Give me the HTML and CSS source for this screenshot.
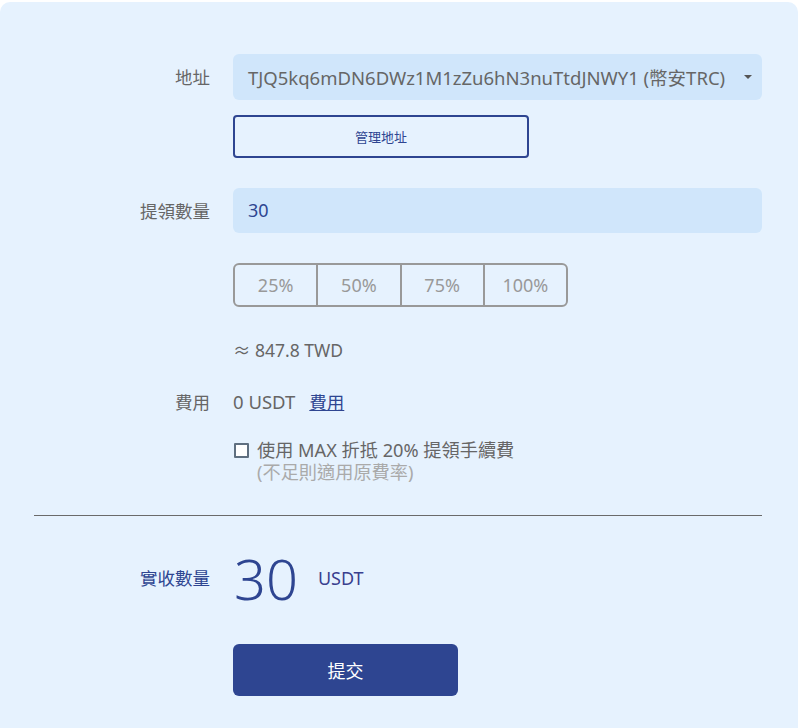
FILE: index.html
```html
<!DOCTYPE html>
<html lang="zh-Hant">
<head>
<meta charset="utf-8">
<link rel="stylesheet" href="styles.css">
</head>
<body>
<div class="card">
  <div class="row">
    <div class="label">地址</div>
    <div class="field">
      <div class="select">
        <span class="select-text">TJQ5kq6mDN6DWz1M1zZu6hN3nuTtdJNWY1 (幣安TRC)</span>
        <span class="caret"></span>
      </div>
      <button class="manage">管理地址</button>
    </div>
  </div>

  <div class="row row-amount">
    <div class="label">提領數量</div>
    <div class="field">
      <div class="input">30</div>
      <div class="pct">
        <span class="pct-item">25%</span>
        <span class="pct-item">50%</span>
        <span class="pct-item">75%</span>
        <span class="pct-item">100%</span>
      </div>
      <div class="approx">≈ 847.8 TWD</div>
    </div>
  </div>

  <div class="row row-fee">
    <div class="label">費用</div>
    <div class="field">
      <div class="fee-line"><span>0 USDT</span><a class="fee-link">費用</a></div>
      <div class="max-opt">
        <span class="checkbox"></span>
        <div class="max-text">
          <div>使用 MAX 折抵 20% 提領手續費</div>
          <div class="max-sub">(不足則適用原費率)</div>
        </div>
      </div>
    </div>
  </div>

  <hr class="divider">

  <div class="row row-receive">
    <div class="label label-dark">實收數量</div>
    <div class="field receive">
      <span class="big">30</span>
      <span class="unit">USDT</span>
    </div>
  </div>

  <div class="row row-submit">
    <div class="label"></div>
    <div class="field">
      <button class="submit">提交</button>
    </div>
  </div>
</div>
</body>
</html>
```
FILE: styles.css
```css
* { box-sizing: border-box; }
html, body { margin: 0; padding: 0; background: #ffffff; }
body {
  font-family: "Noto Sans", "Noto Sans CJK TC", sans-serif;
  color: #666666;
}
.card {
  width: 798px;
  margin-top: 2px;
  background: #e6f2fe;
  border-radius: 10px;
  padding: 52px 36px 40px 0;
  min-height: 740px;
}
.row {
  display: grid;
  grid-template-columns: 210px 529px;
  column-gap: 23px;
}
.label {
  text-align: right;
  font-size: 17.5px;
  line-height: 46px;
  color: #666666;
}
.field { display: flex; flex-direction: column; align-items: flex-start; }
.select {
  width: 529px;
  height: 46px;
  background: #d0e6fb;
  border-radius: 6px;
  display: flex;
  align-items: center;
  padding: 0 10px 0 15px;
  justify-content: space-between;
  font-size: 18.5px;
  color: #666666;
}
.caret {
  width: 0; height: 0;
  border-left: 4px solid transparent;
  border-right: 4px solid transparent;
  border-top: 4px solid #555;
}
.manage {
  margin-top: 15px;
  width: 296px;
  height: 43px;
  border: 2px solid #2e4591;
  border-radius: 4px;
  background: transparent;
  font-family: inherit;
  font-size: 13px;
  color: #2e4591;
  padding: 0;
}
.row-amount { margin-top: 30px; }
.input {
  width: 529px;
  height: 45px;
  background: #d0e6fb;
  border-radius: 6px;
  padding-left: 15px;
  font-size: 18px;
  line-height: 45px;
  color: #2e4591;
}
.pct {
  margin-top: 30px;
  display: flex;
  width: 335px;
  height: 44px;
  border: 2px solid #999999;
  border-radius: 6px;
}
.pct-item {
  flex: 1;
  display: flex;
  align-items: center;
  justify-content: center;
  font-size: 18px;
  color: #999999;
}
.pct-item + .pct-item { border-left: 2px solid #999999; }
.approx {
  margin-top: 31px;
  font-size: 17.5px;
  line-height: 24px;
  color: #666666;
}
.row-fee { margin-top: 25px; }
.row-fee .label { line-height: 30px; }
.fee-line {
  font-size: 18.5px;
  line-height: 30px;
  display: flex;
  gap: 14px;
}
.fee-link { color: #2e4591; text-decoration: underline; font-size: 17.5px; }
.max-opt {
  margin-top: 22px;
  display: flex;
  align-items: flex-start;
  gap: 8px;
}
.checkbox {
  width: 15px; height: 15px;
  margin-top: 4px;
  margin-left: 1px;
  border: 2px solid #5f6f80;
  background: #fff;
  border-radius: 1px;
}
.max-text { font-size: 18.2px; line-height: 22px; color: #666666; }
.max-sub { color: #aaaaaa; }
.divider {
  margin: 32px 0 0 34px;
  width: 728px;
  border: 0;
  border-top: 1px solid #6a6a6a;
  height: 0;
}
.row-receive { margin-top: 37px; }
.row-receive .label { line-height: 50px; }
.label-dark { color: #2e4591; }
.receive { flex-direction: row; align-items: center; height: 50px; }
.big {
  font-size: 56px;
  font-weight: 300;
  color: #2e4591;
  line-height: 50px;
  margin-left: 1px;
}
.unit {
  margin-left: 20px;
  font-size: 18px;
  color: #3a3f8f;
}
.row-submit { margin-top: 41px; }
.submit {
  width: 225px;
  height: 52px;
  background: #2e4591;
  color: #ffffff;
  border: 0;
  border-radius: 6px;
  font-family: inherit;
  font-size: 18px;
  padding: 0;
}
```
